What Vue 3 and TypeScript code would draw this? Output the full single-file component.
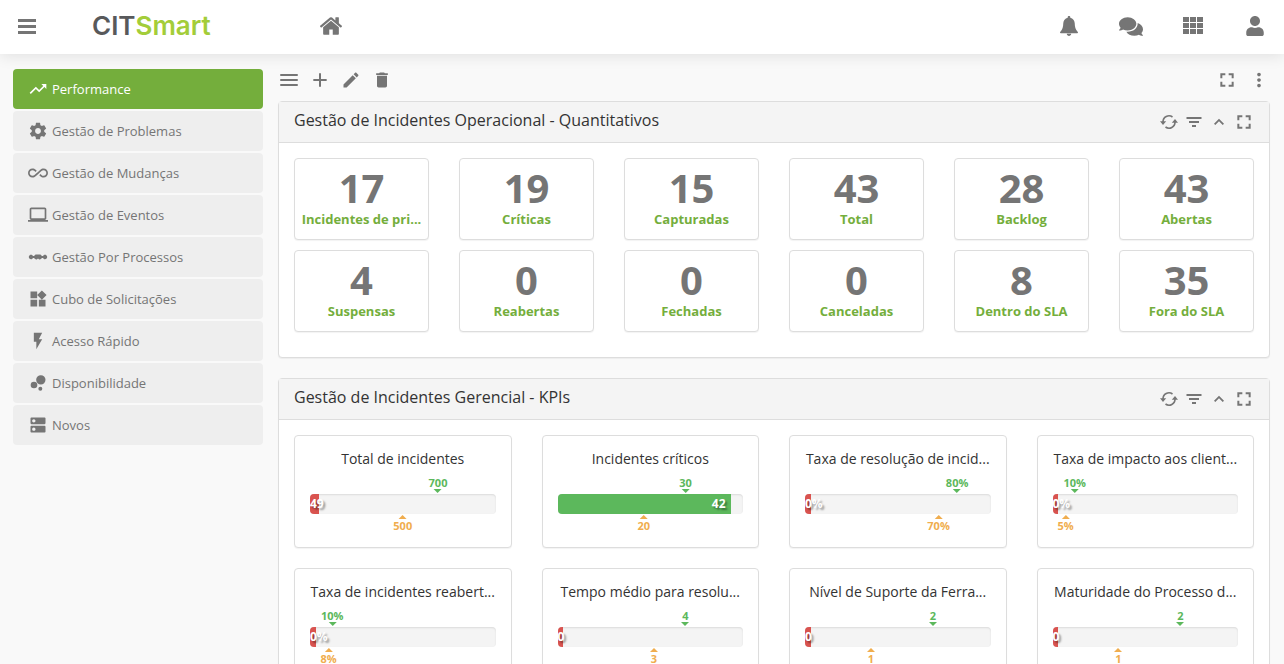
<script setup lang="ts">
interface NavItem { label: string; icon: string; active?: boolean }
interface Stat { value: number; label: string }
interface Kpi {
  title: string
  value: string
  fill: number
  tone: 'bad' | 'good'
  goal: string
  goalAt: number
  limit: string
  limitAt: number
}

const icons: Record<string, string> = {
  trend: 'M16 6l2.29 2.29-4.88 4.88-4-4L2 16.59 3.41 18l6-6 4 4 6.3-6.29L22 12V6z',
  gear: 'M19.43 12.98c.04-.32.07-.64.07-.98s-.03-.66-.07-.98l2.11-1.65c.19-.15.24-.42.12-.64l-2-3.46c-.12-.22-.39-.3-.61-.22l-2.49 1c-.52-.4-1.08-.73-1.69-.98l-.38-2.65C14.46 2.18 14.25 2 14 2h-4c-.25 0-.46.18-.49.42l-.38 2.65c-.61.25-1.17.59-1.69.98l-2.49-1c-.23-.09-.49 0-.61.22l-2 3.46c-.13.22-.07.49.12.64l2.11 1.65c-.04.32-.07.65-.07.98s.03.66.07.98l-2.11 1.65c-.19.15-.24.42-.12.64l2 3.46c.12.22.39.3.61.22l2.49-1c.52.4 1.08.73 1.69.98l.38 2.65c.03.24.24.42.49.42h4c.25 0 .46-.18.49-.42l.38-2.65c.61-.25 1.17-.59 1.69-.98l2.49 1c.23.09.49 0 .61-.22l2-3.46c.12-.22.07-.49-.12-.64l-2.11-1.65zM12 15.5c-1.93 0-3.5-1.57-3.5-3.5s1.57-3.5 3.5-3.5 3.5 1.57 3.5 3.5-1.57 3.5-3.5 3.5z',
  infinity: 'M18.6 6.62c-1.44 0-2.8.56-3.77 1.53L12 10.66 10.48 12h.01L7.8 14.39c-.64.64-1.49.99-2.4.99-1.87 0-3.39-1.51-3.39-3.38S3.53 8.62 5.4 8.62c.91 0 1.76.35 2.44 1.03l1.13 1 1.51-1.34L9.22 8.2C8.2 7.18 6.84 6.62 5.4 6.62 2.42 6.62 0 9.04 0 12s2.42 5.38 5.4 5.38c1.44 0 2.8-.56 3.77-1.53l2.83-2.5.01.01L13.52 12h-.01l2.69-2.39c.64-.64 1.49-.99 2.4-.99 1.87 0 3.39 1.51 3.39 3.38s-1.52 3.38-3.39 3.38c-.9 0-1.76-.35-2.44-1.03l-1.14-1.01-1.51 1.34 1.27 1.12c1.02 1.01 2.37 1.57 3.82 1.57 2.98 0 5.4-2.41 5.4-5.38s-2.42-5.37-5.4-5.37z',
  laptop: 'M20 18c1.1 0 1.99-.9 1.99-2L22 5c0-1.1-.9-2-2-2H4c-1.1 0-2 .9-2 2v11c0 1.1.9 2 2 2H0v2h24v-2h-4zM4 5h16v11H4V5z',
  linear: 'M23 12c0-1.500-1.120-2.700-2.600-2.700-1.020 0-1.900.62-2.290 1.500h-1.520c-.39-.88-1.360-1.700-2.590-1.700h-4c-1.230 0-2.200.82-2.590 1.700H5.890C5.500 9.920 4.620 9.300 3.600 9.300 2.120 9.300 1 10.500 1 12s1.120 2.700 2.600 2.700c1.020 0 1.900-.62 2.290-1.500h1.520c.39.88 1.360 1.700 2.590 1.700h.5l1.500-1 1.500 1h.5c1.230 0 2.200-.82 2.590-1.700h1.520c.39.88 1.270 1.500 2.290 1.500 1.480 0 2.600-1.200 2.600-2.700z',
  widgets: 'M13 13v8h8v-8h-8zM3 21h8v-8H3v8zM3 3v8h8V3H3zm13.66-1.31L11 7.34 16.66 13l5.66-5.66-5.66-5.65z',
  bolt: 'M7 2v11h3v9l7-12h-4l4-8z',
  bubbles: 'M11.2 14.4a4 4 0 1 1-8 0 4 4 0 0 1 8 0zM17.200 19a2.400 2.400 0 1 1-4.800 0 2.400 2.400 0 0 1 4.800 0zM21 8.200a5.600 5.600 0 1 1-11.200 0 5.600 5.600 0 0 1 11.200 0z',
  server: 'M20 13H4c-.55 0-1 .45-1 1v6c0 .55.45 1 1 1h16c.55 0 1-.45 1-1v-6c0-.55-.45-1-1-1zM7 19c-1.1 0-2-.9-2-2s.9-2 2-2 2 .9 2 2-.9 2-2 2zM20 3H4c-.55 0-1 .45-1 1v6c0 .55.45 1 1 1h16c.55 0 1-.45 1-1V4c0-.55-.45-1-1-1zM7 9c-1.1 0-2-.9-2-2s.9-2 2-2 2 .9 2 2-.9 2-2 2z',
  menu: 'M1.500 4.800h21v2.400h-21zM1.500 10.800h21v2.400h-21zM1.500 16.800h21v2.400h-21z',
  plus: 'M20 13.200h-6.800V20h-2.400v-6.800H4v-2.400h6.800V4h2.400v6.800H20z',
  pencil: 'M3 17.250V21h3.750L17.810 9.940l-3.750-3.750L3 17.250zM20.710 7.040c.39-.39.39-1.020 0-1.410l-2.340-2.340c-.39-.39-1.020-.39-1.410 0l-1.830 1.830 3.750 3.750 1.830-1.830z',
  trash: 'M6 19c0 1.100.9 2 2 2h8c1.100 0 2-.9 2-2V7H6v12zM19 4h-3.500l-1-1h-5l-1 1H5v2h14V4z',
  expand: 'M4 4h6v2.400H6.400V10H4zM14 4h6v6h-2.400V6.400H14zM4 14h2.400v3.600H10V20H4zM17.600 14H20v6h-6v-2.400h3.600z',
  more: 'M12 8c1.100 0 2-.9 2-2s-.9-2-2-2-2 .9-2 2 .9 2 2 2zm0 2c-1.100 0-2 .9-2 2s.9 2 2 2 2-.9 2-2-.9-2-2-2zm0 6c-1.100 0-2 .9-2 2s.9 2 2 2 2-.9 2-2-.9-2-2-2z',
  filter: 'M9.600 18h4.800v-2.400H9.600V18zM3 6v2.400h18V6H3zm3 7.200h12v-2.400H6v2.400z',
  up: 'M12 8l-6 6 1.500 1.500L12 11l4.500 4.500L18 14z',
}

const nav: NavItem[] = [
  { label: 'Performance', icon: 'trend', active: true },
  { label: 'Gestão de Problemas', icon: 'gear' },
  { label: 'Gestão de Mudanças', icon: 'infinity' },
  { label: 'Gestão de Eventos', icon: 'laptop' },
  { label: 'Gestão Por Processos', icon: 'linear' },
  { label: 'Cubo de Solicitações', icon: 'widgets' },
  { label: 'Acesso Rápido', icon: 'bolt' },
  { label: 'Disponibilidade', icon: 'bubbles' },
  { label: 'Novos', icon: 'server' },
]

const tools = [
  { label: 'Listar', icon: 'menu' },
  { label: 'Adicionar', icon: 'plus' },
  { label: 'Editar', icon: 'pencil' },
  { label: 'Excluir', icon: 'trash' },
]

const panelTools = [
  { label: 'Atualizar', icon: 'refresh' },
  { label: 'Filtrar', icon: 'filter' },
  { label: 'Recolher', icon: 'up' },
  { label: 'Expandir', icon: 'expand' },
]

const stats: Stat[] = [
  { value: 17, label: 'Incidentes de pri...' },
  { value: 19, label: 'Críticas' },
  { value: 15, label: 'Capturadas' },
  { value: 43, label: 'Total' },
  { value: 28, label: 'Backlog' },
  { value: 43, label: 'Abertas' },
  { value: 4, label: 'Suspensas' },
  { value: 0, label: 'Reabertas' },
  { value: 0, label: 'Fechadas' },
  { value: 0, label: 'Canceladas' },
  { value: 8, label: 'Dentro do SLA' },
  { value: 35, label: 'Fora do SLA' },
]

const kpis: Kpi[] = [
  { title: 'Total de incidentes', value: '49', fill: 5, tone: 'bad', goal: '700', goalAt: 69, limit: '500', limitAt: 50 },
  { title: 'Incidentes críticos', value: '42', fill: 93.3, tone: 'good', goal: '30', goalAt: 69, limit: '20', limitAt: 46.5 },
  { title: 'Taxa de resolução de incid...', value: '0%', fill: 3, tone: 'bad', goal: '80%', goalAt: 82, limit: '70%', limitAt: 72 },
  { title: 'Taxa de impacto aos client...', value: '0%', fill: 3, tone: 'bad', goal: '10%', goalAt: 12, limit: '5%', limitAt: 7 },
  { title: 'Taxa de incidentes reabert...', value: '0%', fill: 3, tone: 'bad', goal: '10%', goalAt: 12, limit: '8%', limitAt: 10 },
  { title: 'Tempo médio para resolu...', value: '0', fill: 3, tone: 'bad', goal: '4', goalAt: 69, limit: '3', limitAt: 52 },
  { title: 'Nível de Suporte da Ferra...', value: '0', fill: 3, tone: 'bad', goal: '2', goalAt: 69, limit: '1', limitAt: 35.5 },
  { title: 'Maturidade do Processo d...', value: '0', fill: 3, tone: 'bad', goal: '2', goalAt: 69, limit: '1', limitAt: 35.5 },
]

const panels = [
  { id: 'quant', title: 'Gestão de Incidentes Operacional - Quantitativos' },
  { id: 'kpi', title: 'Gestão de Incidentes Gerencial - KPIs' },
]
</script>

<template>
  <div class="app">
    <header class="topbar">
      <button class="icon-btn" aria-label="Menu">
        <svg width="18" height="15" viewBox="0 0 18 15"><path d="M0 0h18v3H0zM0 6h18v3H0zM0 12h18v3H0z" /></svg>
      </button>
      <a class="logo" href="#">CIT<span>Smart</span></a>
      <a class="home" href="#" aria-label="Início">
        <svg width="22" height="18" viewBox="90 250 1612 1290"><path d="M1472 992v480q0 26-19 45t-45 19h-384v-384h-256v384h-384q-26 0-45-19t-19-45v-480q0-1 .5-3t.5-3l575-474 575 474q1 2 1 6zm223-69l-62 74q-8 9-21 11h-3q-13 0-21-7l-692-577-692 577q-12 8-24 7-13-2-21-11l-62-74q-8-10-7-23.500t11-21.500l719-599q32-26 76-26t76 26l244 204v-195q0-14 9-23t23-9h192q14 0 23 9t9 23v408l219 182q10 8 11 21.500t-7 23.500z" /></svg>
      </a>
      <div class="top-actions">
        <button class="icon-btn" aria-label="Notificações">
          <svg width="18" height="20" viewBox="0 0 18 20"><path d="M9 0c.8 0 1.300.5 1.300 1.200v.5C13 2.300 14.500 4.500 14.700 7c.2 4 .6 6.500 3.100 9 .4.5.2 1.300-.6 1.300H.8c-.8 0-1-.8-.6-1.300 2.500-2.500 2.900-5 3.100-9 .2-2.500 1.700-4.700 4.400-5.300v-.5C7.700.5 8.200 0 9 0zM6.800 17.800h4.400c0 1.300-1 2.200-2.200 2.200s-2.200-.9-2.200-2.200z" /></svg>
        </button>
        <button class="icon-btn" aria-label="Mensagens">
          <svg width="24" height="19" viewBox="0 32 576 448"><path d="M416 192c0-88.400-93.100-160-208-160S0 103.600 0 192c0 34.300 14.100 65.900 38 92-13.400 30.200-35.500 54.200-35.800 54.500-2.200 2.300-2.800 5.700-1.500 8.700S4.800 352 8 352c36.600 0 66.900-12.300 88.700-25 32.200 15.700 70.300 25 111.300 25 114.900 0 208-71.600 208-160zm122 220c23.900-26 38-57.700 38-92 0-66.900-53.500-124.200-129.300-148.100.9 6.600 1.300 13.300 1.300 20.100 0 105.900-107.700 192-240 192-10.800 0-21.300-.8-31.700-1.900C207.800 439.600 281.800 480 368 480c41 0 79.100-9.200 111.300-25 21.800 12.700 52.100 25 88.700 25 3.200 0 6.100-1.900 7.300-4.800 1.300-2.900.7-6.300-1.500-8.700-.3-.3-22.400-24.200-35.800-54.500z" /></svg>
        </button>
        <button class="icon-btn" aria-label="Aplicativos">
          <svg width="20" height="18" viewBox="0 0 20 18"><path d="M0 0h6v5H0zM7 0h6v5H7zM14 0h6v5h-6zM0 6h6v5H0zM7 6h6v5H7zM14 6h6v5h-6zM0 12h6v5H0zM7 12h6v5H7zM14 12h6v5h-6z" /></svg>
        </button>
        <button class="icon-btn" aria-label="Usuário">
          <svg width="18" height="20" viewBox="0 0 448 512"><path d="M224 256c70.700 0 128-57.300 128-128S294.700 0 224 0 96 57.300 96 128s57.300 128 128 128zm89.600 32h-16.700c-22.200 10.200-46.900 16-72.900 16s-50.600-5.800-72.900-16h-16.700C60.200 288 0 348.200 0 422.400V464c0 26.500 21.500 48 48 48h352c26.500 0 48-21.500 48-48v-41.600c0-74.200-60.200-134.400-134.400-134.400z" /></svg>
        </button>
      </div>
    </header>

    <div class="body">
      <nav class="sidebar">
        <a v-for="n in nav" :key="n.label" href="#" class="nav-item" :class="{ active: n.active }">
          <svg width="20" height="20" viewBox="0 0 24 24"><path :d="icons[n.icon]" /></svg>
          <span>{{ n.label }}</span>
        </a>
      </nav>

      <main class="content">
        <div class="toolbar">
          <button v-for="t in tools" :key="t.label" class="icon-btn" :aria-label="t.label">
            <svg width="20" height="20" viewBox="0 0 24 24"><path :d="icons[t.icon]" /></svg>
          </button>
          <div class="toolbar-end">
            <button class="icon-btn" aria-label="Tela cheia">
              <svg width="20" height="20" viewBox="0 0 24 24"><path :d="icons.expand" /></svg>
            </button>
            <button class="icon-btn" aria-label="Mais opções">
              <svg width="22" height="22" viewBox="0 0 24 24"><path :d="icons.more" /></svg>
            </button>
          </div>
        </div>

        <section v-for="p in panels" :key="p.id" class="panel">
          <header class="panel-head">
            <h2>{{ p.title }}</h2>
            <div class="panel-tools">
              <button v-for="t in panelTools" :key="t.label" class="icon-btn" :aria-label="t.label">
                <svg v-if="t.icon === 'refresh'" width="20" height="20" viewBox="-1 -1 20 20">
                  <path d="M3 9a6 6 0 0 1 9.500-5M15 9a6 6 0 0 1-9.500 5" fill="none" stroke="currentColor" stroke-width="1.600" />
                  <path d="M0 8.300h6.200L3 12zM11.800 9.700H18L15 6z" />
                </svg>
                <svg v-else width="20" height="20" viewBox="0 0 24 24"><path :d="icons[t.icon]" /></svg>
              </button>
            </div>
          </header>

          <div v-if="p.id === 'quant'" class="stats">
            <article v-for="s in stats" :key="s.label" class="card stat">
              <strong>{{ s.value }}</strong>
              <span>{{ s.label }}</span>
            </article>
          </div>

          <div v-else class="kpis">
            <article v-for="k in kpis" :key="k.title" class="card kpi">
              <h3>{{ k.title }}</h3>
              <div class="gauge">
                <span class="mark goal" :style="{ left: k.goalAt + '%' }">{{ k.goal }}</span>
                <div class="track">
                  <div class="fill" :class="k.tone" :style="{ width: k.fill + '%' }">{{ k.value }}</div>
                </div>
                <span class="mark limit" :style="{ left: k.limitAt + '%' }">{{ k.limit }}</span>
              </div>
            </article>
          </div>
        </section>
      </main>
    </div>
  </div>
</template>

<style>
html,
body {
  margin: 0;
  background: #f9f9f9;
}
</style>

<style scoped>
.app {
  display: flex;
  flex-direction: column;
  height: 100vh;
  overflow: hidden;
  font-family: "Open Sans", "Noto Sans", sans-serif;
  font-size: 13px;
  color: #333;
}
.app * {
  box-sizing: border-box;
}
svg {
  display: block;
  fill: currentColor;
}
a {
  color: inherit;
  text-decoration: none;
}
.icon-btn {
  padding: 0;
  border: 0;
  background: none;
  color: #757575;
  cursor: pointer;
}
.topbar {
  display: flex;
  align-items: center;
  flex: none;
  height: 54px;
  padding: 0 17px 2px 18px;
  background: #fff;
  box-shadow: 0 2px 14px rgba(0, 0, 0, 0.1);
  z-index: 1;
}
.logo {
  width: 228px;
  margin-left: 56px;
  font-family: Inter, sans-serif;
  font-size: 26px;
  font-weight: 600;
  line-height: 32px;
  color: #58595b;
}
.logo span {
  color: #a3cd39;
}
.home {
  color: #757575;
}
.top-actions {
  display: flex;
  align-items: center;
  gap: 38px;
  margin-left: auto;
}
.top-actions .icon-btn {
  display: flex;
  justify-content: center;
  width: 24px;
}
.body {
  display: flex;
  flex: 1;
  min-height: 0;
  gap: 15px;
  padding: 0 14px 0 13px;
  overflow-y: auto;
  scrollbar-width: none;
}
.sidebar {
  display: flex;
  flex-direction: column;
  flex: none;
  gap: 2px;
  width: 250px;
  padding-top: 15px;
}
.nav-item {
  display: flex;
  align-items: center;
  gap: 4px;
  height: 40px;
  padding: 0 15px;
  border-radius: 4px;
  background: #eee;
  color: #757575;
}
.nav-item.active {
  background: #74ae3c;
  color: #fff;
}
.content {
  flex: 1;
  min-width: 0;
}
.toolbar {
  display: flex;
  align-items: center;
  gap: 11px;
  height: 47px;
  padding: 5px 0 0 1px;
}
.toolbar-end {
  display: flex;
  align-items: center;
  gap: 11px;
  margin-left: auto;
}
.panel {
  margin-bottom: 20px;
  border: 1px solid #ddd;
  border-radius: 4px;
  background: #fff;
  box-shadow: 0 1px 1px rgba(0, 0, 0, 0.05);
}
.panel-head {
  display: flex;
  align-items: center;
  justify-content: space-between;
  height: 41px;
  padding: 0 15px;
  border-bottom: 1px solid #ddd;
  background: #f4f4f4;
}
.panel-head h2 {
  margin: 0;
  padding-bottom: 4px;
  font-size: 16px;
  font-weight: 400;
  line-height: 22px;
}
.panel-tools {
  display: flex;
  gap: 5px;
}
.card {
  min-width: 0;
  border: 1px solid #ddd;
  border-radius: 4px;
  background: #fff;
  box-shadow: 0 1px 1px rgba(0, 0, 0, 0.05);
  text-align: center;
}
.stats {
  display: grid;
  grid-template-columns: repeat(6, minmax(0, 1fr));
  gap: 10px 30px;
  padding: 15px 15px 25px;
}
.stat {
  height: 82px;
  padding: 7px 5px;
}
.stat strong {
  display: block;
  font-size: 40px;
  line-height: 44px;
  color: #757575;
}
.stat span {
  display: block;
  font-weight: 700;
  line-height: 18px;
  color: #74ae3c;
  white-space: nowrap;
}
.kpis {
  display: grid;
  grid-template-columns: repeat(4, minmax(0, 1fr));
  gap: 20px 30px;
  padding: 15px;
}
.kpi {
  height: 113px;
  padding: 13px 15px;
}
.kpi h3 {
  margin: 0;
  font-size: 14px;
  font-weight: 400;
  line-height: 20px;
  white-space: nowrap;
}
.gauge {
  position: relative;
  padding: 25px 0;
}
.track {
  height: 20px;
  overflow: hidden;
  border-radius: 4px;
  background: #f4f4f4;
  box-shadow: inset 0 1px 2px rgba(0, 0, 0, 0.1);
}
.fill {
  height: 20px;
  font-size: 12px;
  font-weight: 700;
  line-height: 20px;
  color: #fff;
  text-shadow: 2px 2px 2px rgba(0, 0, 0, 0.4);
}
.fill.bad {
  background: #d9534f;
  text-align: left;
}
.fill.good {
  padding-right: 5px;
  background: #5cb85c;
  text-align: right;
}
.mark {
  position: absolute;
  display: flex;
  flex-direction: column;
  align-items: center;
  font-size: 11px;
  font-weight: 700;
  line-height: 12px;
  transform: translateX(-50%);
}
.mark::before,
.mark::after {
  border: 4px solid transparent;
}
.goal {
  top: 8px;
  color: #5cb85c;
}
.goal::after {
  content: "";
  border-top-color: currentColor;
  border-bottom: 0;
}
.limit {
  top: 46px;
  color: #f0ad4e;
}
.limit::before {
  content: "";
  margin-bottom: 1px;
  border-bottom-color: currentColor;
  border-top: 0;
}
</style>
